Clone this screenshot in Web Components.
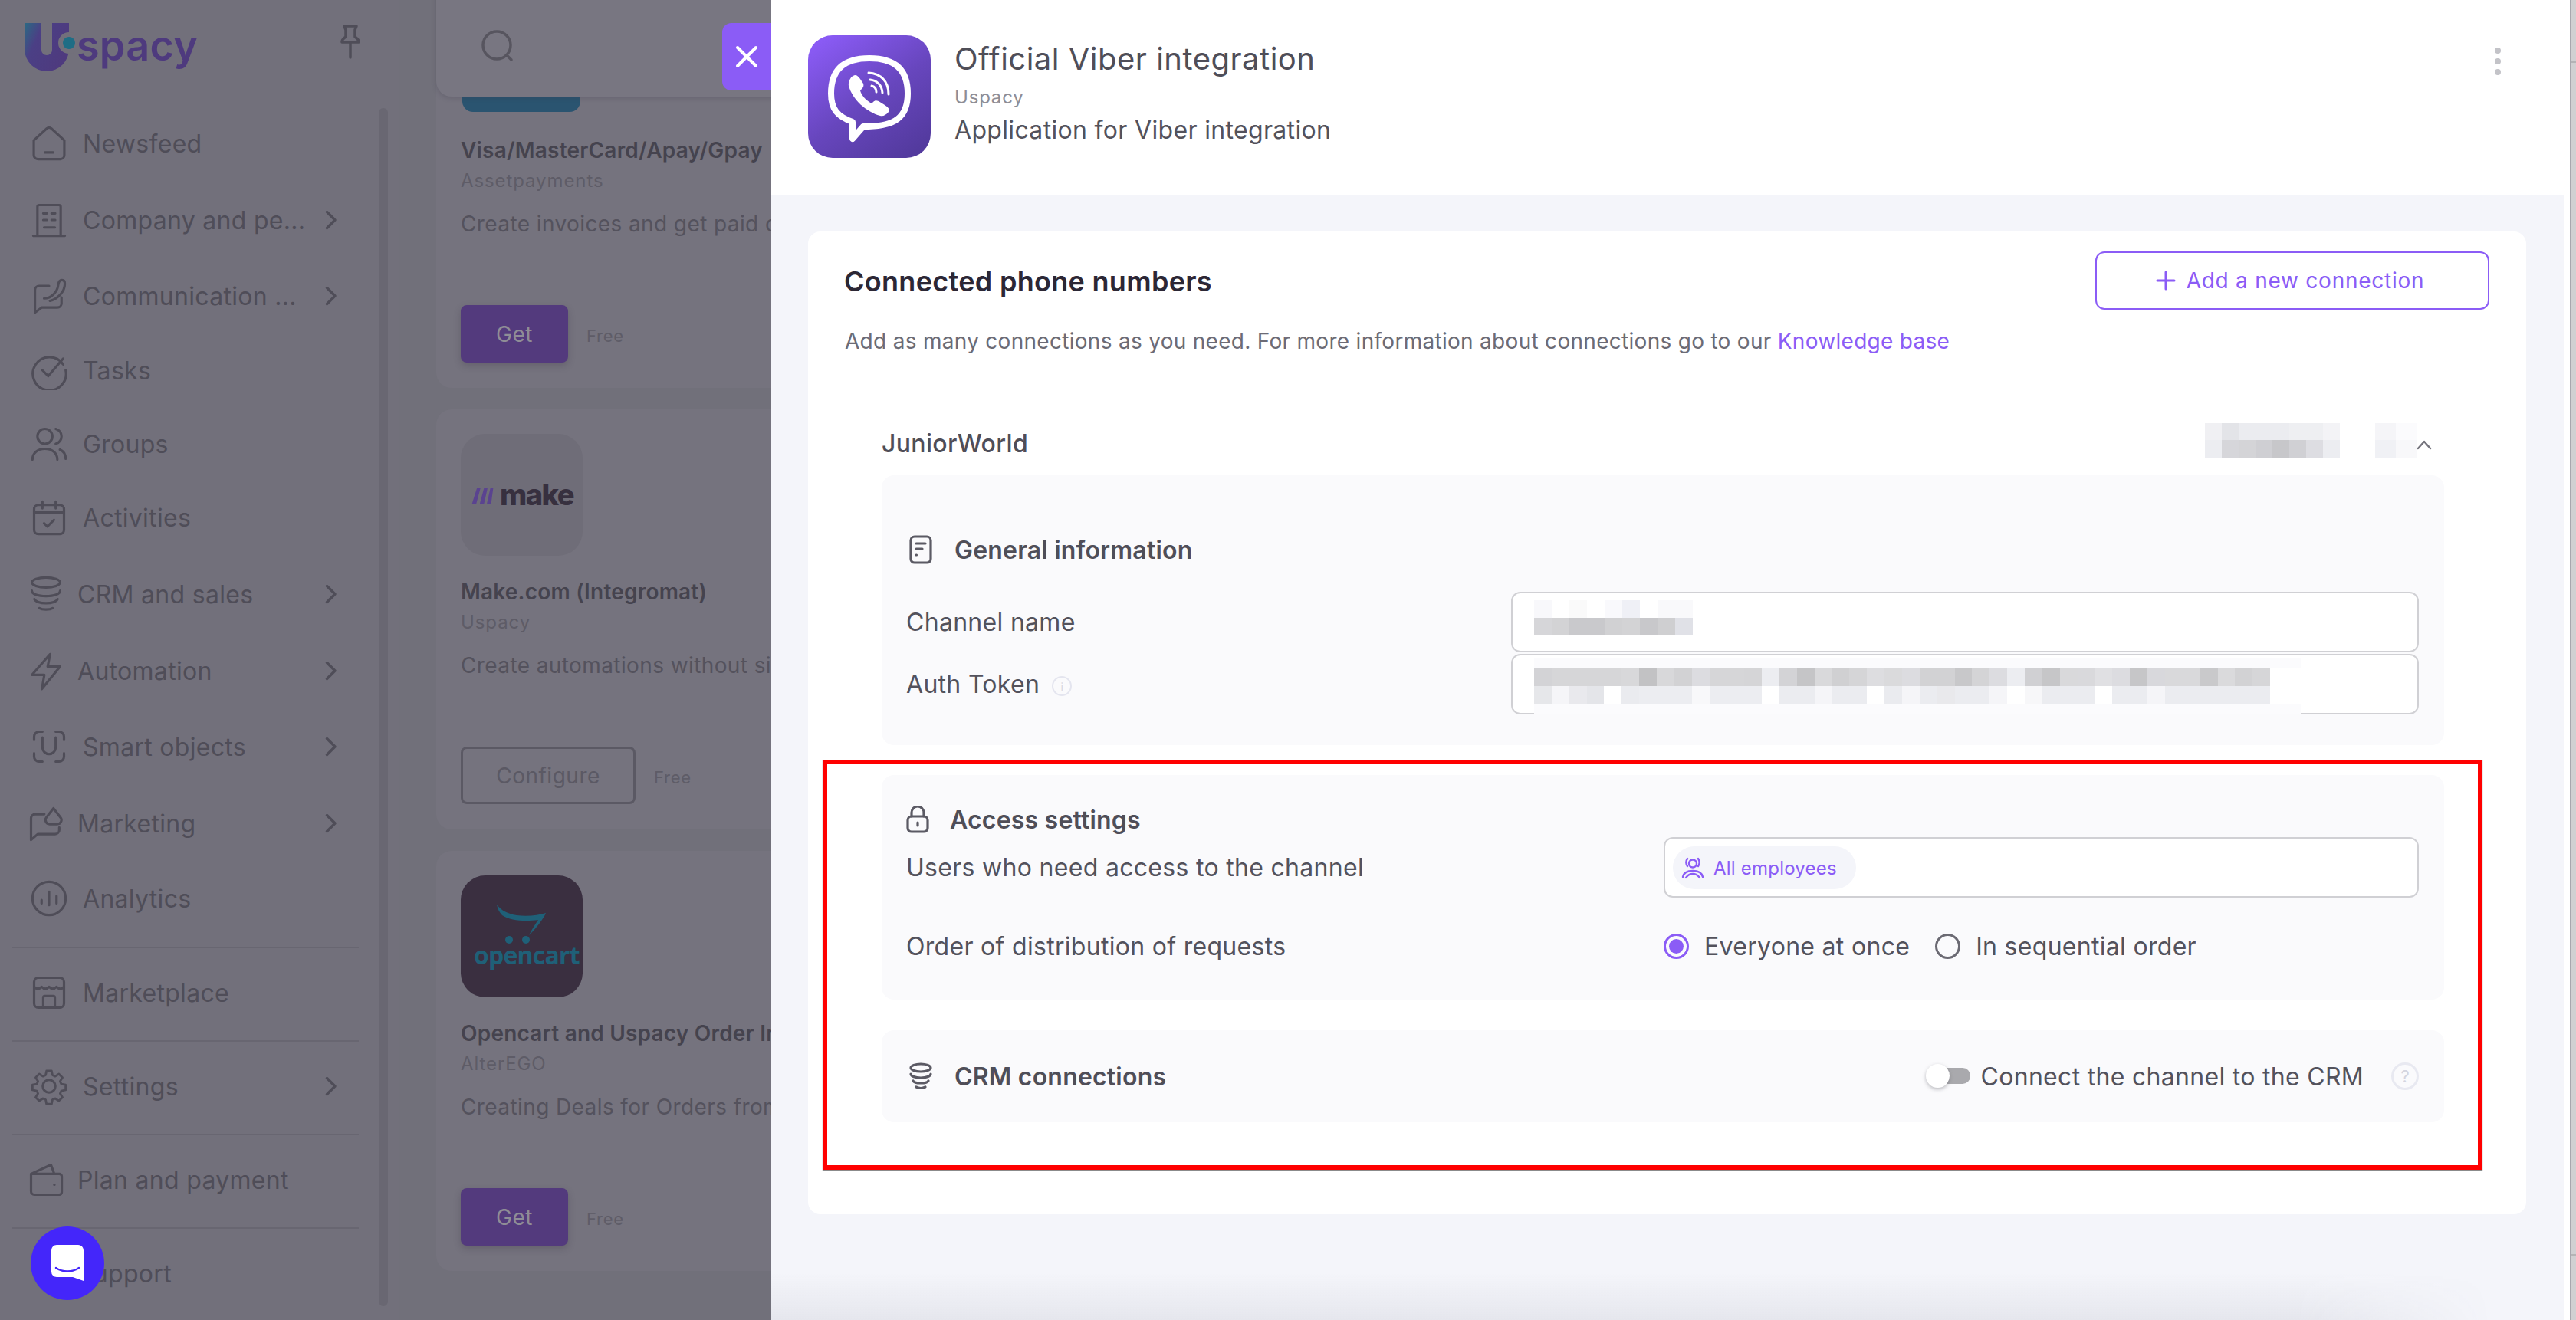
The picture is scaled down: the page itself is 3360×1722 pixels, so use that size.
<!DOCTYPE html>
<html lang="en"><head><meta charset="utf-8"><title>Official Viber integration</title>
<style>
html,body{margin:0;padding:0;width:3360px;height:1722px;overflow:hidden;background:#75737e;font-family:Inter,"Liberation Sans",sans-serif}
</style></head><body>
<app-root></app-root>
<script>
const FONT='font-family:Inter,"Liberation Sans",sans-serif;';
const def=(name,html,init)=>customElements.define(name,class extends HTMLElement{
  constructor(){super();this.attachShadow({mode:'open'});}
  connectedCallback(){ if(this.done)return; this.done=1; this.shadowRoot.innerHTML=typeof html==='function'?html(this):html; }
});
const S=(p,w,h,sw,c,vb)=>`<svg width="${w}" height="${h}" viewBox="${vb||'0 0 24 24'}" fill="none" stroke="${c}" stroke-width="${sw}" stroke-linecap="round" stroke-linejoin="round" style="display:block;flex:none">${p}</svg>`;
const NAV={
home:'<path d="M2.800 10.200 10.700 3a2 2 0 0 1 2.600 0l7.900 7.200V19a2.500 2.500 0 0 1-2.500 2.500H5.300A2.500 2.500 0 0 1 2.800 19ZM9.500 17.500h5"/>',
building:'<path d="M5 21.500V4a1 1 0 0 1 1-1h12a1 1 0 0 1 1 1v17.500M2.500 21.500h19M8.500 8h2.200M13.500 8h2.200M8.500 12h2.200M13.500 12h2.200M9 16.500h6.500"/>',
comm:'<path d="M12 6H6a2.500 2.500 0 0 0-2.500 2.500v13.500l4-3H17a2.500 2.500 0 0 0 2.500-2.500V13"/><path d="M9 13.500c4.500 0 8-4 8.500-8 .2-1.800 1-3 2.300-3 1.200 0 1.700 1 1.700 2.200 0 4-3.500 9-9 10.300"/>',
tasks:'<path d="M20.500 8.500A10 10 0 1 0 22 12M8 12l3.500 3.500L20.500 5"/>',
groups:'<circle cx="9.500" cy="7.500" r="4.500"/><path d="M2 21.500c0-4 3.200-6.500 7.500-6.500s7.500 2.500 7.500 6.500M16 3c2.500.8 3.500 2.500 3.500 4.500s-1 3.700-3.500 4.500M18.500 15.500c2 .8 3.500 2.800 3.500 5.500"/>',
calendar:'<rect x="3" y="4.500" width="18" height="17.500" rx="2.500"/><path d="M8 2.500v4M16 2.500v4M3 9h18M9 15.500l2 2 4-4"/>',
crm:'<ellipse cx="12" cy="5" rx="8.500" ry="3"/><path d="M3.500 10c0 2 3.500 3.200 8.500 3.200s8.500-1.200 8.500-3.200M5 15c.5 1.500 3.500 2.500 7 2.500s6.500-1 7-2.500M8 20.500c1 .6 2.400.8 4 .8s3-.2 4-.8"/>',
bolt:'<path d="M14.500 2 3.500 14.500h7.500L9.500 23l11-13.500h-7.500Z"/>',
smart:'<path d="M8 3H6a3 3 0 0 0-3 3v2M16 3h2a3 3 0 0 1 3 3v2M3 16v2a3 3 0 0 0 3 3h2M21 16v2a3 3 0 0 1-3 3h-2M8 6.500v6a4 4 0 0 0 8 0v-6"/>',
mkt:'<path d="M11 6.500H5.500A2.500 2.500 0 0 0 3 9v13l4-3.500h10.500A2.500 2.500 0 0 0 20 16v-1.500"/><path d="M16.500 3l4.300 5.500a2.500 2.500 0 0 1-2 4h-4.600a2.500 2.500 0 0 1-2-4Z"/>',
chart:'<circle cx="12" cy="12" r="10"/><path d="M7.500 15v-2M12 16V8M16.500 15v-4.500"/>',
store:'<rect x="3" y="3" width="18" height="18" rx="2.500"/><path d="M3 8.500c1.500 1.500 3 1.500 4.500 0 1.500 1.500 3 1.500 4.500 0 1.500 1.500 3 1.500 4.500 0 1.500 1.500 3 1.500 4.500 0M8.500 21v-6a1 1 0 0 1 1-1h5a1 1 0 0 1 1 1v6"/>',
gear:'<circle cx="12" cy="12" r="3.800"/><path d="M10.300 2.500h3.400l.6 2.900 1.800.8 2.500-1.600 2.400 2.400-1.600 2.500.8 1.800 2.900.6v3.400l-2.900.6-.8 1.800 1.600 2.500-2.400 2.400-2.500-1.600-1.800.8-.6 2.900h-3.400l-.6-2.900-1.800-.8-2.500 1.600-2.400-2.400 1.600-2.500-.8-1.800-2.900-.6v-3.400l2.900-.6.8-1.800-1.600-2.500 2.400-2.400 2.500 1.600 1.800-.8Z" transform="translate(12 12) scale(.9) translate(-12 -12.800)"/>',
wallet:'<path d="M3 8.500V19a2 2 0 0 0 2 2h15a1.500 1.500 0 0 0 1.500-1.500V10A1.500 1.500 0 0 0 20 8.500H3Zm0 0L15 3l2 5.500M17 15h.1"/>',
support:''
};
const CHEV=`<svg width="16" height="26" viewBox="0 0 16 26" fill="none" stroke="#4f4d58" stroke-width="3.500" stroke-linecap="round" stroke-linejoin="round" style="display:block"><path d="M2.500 2.500 13 13 2.500 23.500"/></svg>`;

def('nav-item',h=>{
  const tight=h.hasAttribute('tight'), ic=h.getAttribute('icon');
  return `<style>
  :host{display:flex;align-items:center;height:${h.getAttribute('h')}px;${FONT}font-size:32px;color:#4f4d58;letter-spacing:.3px}
  .ic{width:${tight?'67':'70'}px;margin-left:${tight?'34':'38'}px;flex:none}
  .t{white-space:nowrap;flex:none}
  .c{position:absolute;left:424px}
  </style><div class="ic">${NAV[ic]?S(NAV[ic],52,52,1.450,'#4f4d58'):''}</div><div class="t"><slot></slot></div>${h.hasAttribute('more')?`<div class="c">${CHEV}</div>`:''}`;
});
def('nav-sep',h=>`<style>:host{display:block;height:2px;margin:${h.getAttribute('m')}px 52px 0 16px;background:#686671}</style>`);

def('uspacy-logo',`<style>
:host{display:flex;align-items:center;height:137px;position:relative}
.u{position:absolute;left:32px;top:30px;overflow:visible}
.t{position:absolute;left:100px;top:24px;font:600 54px/72px Inter,sans-serif;letter-spacing:.2px;color:#4e3a7e}
.p{position:absolute;left:443px;top:32px}
</style>
<svg class="u" width="58" height="63" viewBox="0 0 58 63"><defs><linearGradient id="g" x1="0" y1="0" x2="1" y2=".5"><stop offset="0" stop-color="#2b6a83"/><stop offset=".35" stop-color="#4b3f85"/><stop offset="1" stop-color="#4e3a7e"/></linearGradient></defs>
<path fill="url(#g)" d="M0 0H22V35A7 7 0 0 0 36 35V0H58V34A29 29 0 0 1 0 34Z"/><circle cx="58" cy="26" r="14" fill="#72707b"/><circle cx="58" cy="26" r="8" fill="#1f6d85"/></svg>
<div class="t">spacy</div>
<div class="p"><svg width="28" height="46" viewBox="0 0 28 46" fill="none" stroke="#4f4d58" stroke-width="3.500" stroke-linecap="round" stroke-linejoin="round"><path d="M6 2h16l-2 5v9c3 2 5 4 5 7H3c0-3 2-5 5-7V7ZM14 23v20"/></svg></div>`);

def('ui-sidebar',`<style>
:host{display:block;width:520px;height:1722px;background:#72707b;position:relative;flex:none;overflow:hidden}
.bar{position:absolute;left:494px;top:141px;width:12px;height:1563px;border-radius:6px;background:#696772}
</style>
<uspacy-logo></uspacy-logo>
<nav-item icon="home" h="100">Newsfeed</nav-item>
<nav-item icon="building" h="100" more>Company and pe...</nav-item>
<nav-item icon="comm" h="98" more>Communication ...</nav-item>
<nav-item icon="tasks" h="96">Tasks</nav-item>
<nav-item icon="groups" h="96">Groups</nav-item>
<nav-item icon="calendar" h="96">Activities</nav-item>
<nav-item icon="crm" h="104" tight more>CRM and sales</nav-item>
<nav-item icon="bolt" h="96" tight more>Automation</nav-item>
<nav-item icon="smart" h="102" more>Smart objects</nav-item>
<nav-item icon="mkt" h="98" tight more>Marketing</nav-item>
<nav-item icon="chart" h="98">Analytics</nav-item>
<nav-sep m="14"></nav-sep>
<nav-item icon="store" h="116">Marketplace</nav-item>
<nav-sep m="4"></nav-sep>
<nav-item icon="gear" h="116" more>Settings</nav-item>
<nav-sep m="4"></nav-sep>
<nav-item icon="wallet" h="116" tight>Plan and payment</nav-item>
<nav-sep m="4"></nav-sep>
<nav-item icon="support" h="116" tight>Support</nav-item>
<div class="bar"></div>`);

def('market-card',h=>{
  const btn=h.getAttribute('btn');
  return `<style>
  :host{display:block;height:548px;width:1100px;flex:none;box-sizing:border-box;padding:32px 0 0 32px;background:#75737e;border-radius:20px;${FONT}white-space:nowrap;overflow:hidden}
  .lw{height:160px}
  .n{margin-top:26px;font-size:28px;line-height:40px;font-weight:600;color:#45434e;letter-spacing:.2px}
  .c{margin-top:4px;font-size:24px;line-height:32px;color:#5e5c67;letter-spacing:.9px}
  .d{margin-top:20px;font-size:28px;line-height:40px;color:#54525d;letter-spacing:.4px}
  .a{margin-top:86px;display:flex;align-items:center;gap:24px}
  .b{box-sizing:border-box;height:75px;display:flex;align-items:center;justify-content:center;font-size:28px;letter-spacing:.5px;border-radius:8px}
  .g{width:140px;background:#533a7d;color:#8f8d96;box-shadow:0 4px 10px rgba(50,45,60,.25)}
  .o{width:228px;border:3px solid #5b5964;color:#5b5964}
  .f{font-size:22px;letter-spacing:.7px;color:#5e5c67;margin-top:4px}
  </style><div class="lw"><slot name="logo"></slot></div><div class="n">${h.getAttribute('name')}</div><div class="c">${h.getAttribute('co')}</div><div class="d">${h.getAttribute('desc')}</div>
  <div class="a"><div class="b ${btn==='Get'?'g':'o'}">${btn}</div><div class="f">Free</div></div>`;
});
def('make-logo',`<style>:host{display:block;width:159px;height:159px;border-radius:32px;background:#6f6d78;overflow:hidden}
.w{display:flex;align-items:center;height:159px;padding-left:13px;gap:7px}
.t{font:800 38px/1 Inter,sans-serif;letter-spacing:-1.500px;color:#37303f;margin-top:-2px}</style>
<div class="w"><svg width="31" height="24" viewBox="0 0 30 26" style="margin-top:2px"><path fill="#5a4390" d="M7 2h5L6 24H0ZM17 2h5l-5 22h-6ZM26 2h4l-3 22h-6Z"/></svg><div class="t">make</div></div>`);
def('cart-logo',`<style>:host{display:block;width:159px;height:159px;border-radius:32px;background:#3a2f40;overflow:hidden;position:relative}
.t{position:absolute;left:17px;top:84px;font:700 32px/40px "Open Sans",Inter,sans-serif;letter-spacing:-.8px;color:#1f6078}
svg{position:absolute;left:44px;top:38px}</style>
<svg width="70" height="56" viewBox="0 0 70 56" fill="#1f6078"><path d="M3 0c6 8 14 12 26 14 14 2 28 0 38-3-2 6-14 22-22 29 4-8 8-14 12-20-14 2-36 2-47-6C6 10 4 5 3 0Z"/><circle cx="19" cy="46" r="5"/><circle cx="41" cy="46" r="5"/></svg>
<div class="t">opencart</div>`);
def('visa-logo',`<style>:host{display:block;width:154px;height:156px;margin-left:2px;border-radius:0 0 14px 14px;background:#2a5470}</style>`);

def('search-bar',`<style>:host{display:block;position:absolute;left:569px;top:-10px;width:600px;height:136px;background:#787681;border-radius:0 0 20px 20px;box-shadow:0 2px 6px rgba(60,55,70,.25)}
svg{position:absolute;left:59px;top:49px}</style>
<svg width="44" height="44" viewBox="0 0 44 44" fill="none" stroke="#57555f" stroke-width="3.500" stroke-linecap="round"><circle cx="20" cy="20" r="18"/><path d="M33 33l6 6"/></svg>`);
def('close-tab',`<style>:host{display:flex;align-items:center;justify-content:center;position:absolute;left:942px;top:30px;width:64px;height:88px;background:#8b5cf6;border-radius:12px 0 0 12px}</style>
<svg width="32" height="32" viewBox="0 0 32 32" fill="none" stroke="#fff" stroke-width="4" stroke-linecap="round"><path d="M4 4l24 24M28 4 4 28"/></svg>`);
def('chat-bubble',`<style>:host{display:block;position:absolute;left:40px;top:1600px;width:96px;height:96px;border-radius:50%;background:#4426fa}
svg{position:absolute;left:27px;top:24px}</style>
<svg width="42" height="47" viewBox="0 0 42 47"><path fill="#fff" d="M7 0h28a7 7 0 0 1 7 7v40l-14-5H7a7 7 0 0 1-7-7V7a7 7 0 0 1 7-7Z"/><path d="M6 30c9 6 21 6 30 0" fill="none" stroke="#4426fa" stroke-width="2.500" stroke-linecap="round"/></svg>`);

def('market-area',`<style>:host{display:flex;flex-direction:column;gap:28px;padding-left:49px;margin-top:-42px;height:1764px;flex:1;background:#71707a;overflow:hidden;box-sizing:border-box}</style><slot></slot>`);

const BLUR={
ch1:'f8f8fb ffffff fafafa ffffff f9f9fc eff0f6 ffffff f9f9fb f9f9fb',
ch2:'d6d6d9 d3d3d5 c9c9cc c9c9cc d1d1d3 d3d3d5 c8c8cb cfcfd1 e0e1e7',
a2:'d3d3d6 d6d6d8 d6d6d8 d6d6d8 d6d6d8 d8d8da c2c2c4 d8d8da d2d2d4 dcdce0 d6d6d8 d6d6d8 d5d5d7 ecedf1 d3d3d6 c5c5c7 d9d9db d0d0d2 d5d5d7 dddde0 dadadc dcdce0 d2d2d4 d2d2d4 c8c8ca d4d4d6 dcdce0 ecedf1 d0d0d3 c6c6c8 d9d9db d9d9dc e0e0e3 dcdce0 c6c6c8 d8d8dc d9d9db d9d9db c9c9cb dadadc d2d2d4 d6d6d8',
a3:'e6e7ea f5f5f8 e9e9ed e4e5e9 ffffff eaebef ecedf1 ecedf1 ecedf1 f8f8fa ecedf1 ecedf1 ecedf1 ffffff ebecf0 ebecf0 f5f5f8 ebecf0 ebecf0 ffffff eaebef f5f5f8 ebecf0 e9e9ec ebecf0 ebecf0 f5f5f8 ffffff f7f7f9 ebecf0 ebecf0 ebecf0 ffffff ebecf0 ebecf0 f5f5f8 ebecf0 ebecf0 ebecf0 ebecf0 ebecf0 ebecf0',
j1:'f0f0f3 e3e4e8 ebecf0 ebecf0 ebecf0 eeeff2 eeeff2 f3f3f6',
j2:'ecedf1 d6d6da d4d4d7 cfcfd3 c7c7ca d0d0d4 dddde2 ecedf1',
k1:'f5f5f8 fbfbfd',k2:'f0f1f5 f8f8fa'
};
def('blur-row',h=>{
 const w=+h.getAttribute('w')||23, ht=+h.getAttribute('ht')||23;
 const cells=BLUR[h.getAttribute('k')].split(' ').map(c=>`<i style="background:#${c}"></i>`).join('');
 return `<style>:host{display:flex;height:${ht}px}i{display:block;width:${w}px;height:100%;flex:none}</style>${cells}`;
});
def('soft-strip',h=>`<style>:host{display:block;height:14px;width:${h.getAttribute('w')}px;background:#fbfbfd}</style>`);

def('text-field',h=>`<style>:host{display:block;box-sizing:border-box;height:79px;border:2px solid #d0d0d4;border-radius:12px;background:#fff;padding:${h.getAttribute('pt')||9}px 0 0 ${h.getAttribute('pl')||29}px}</style><slot></slot>`);
def('section-title',h=>`<style>:host{display:flex;align-items:center;height:44px;${FONT}font-size:32px;font-weight:600;color:#4f4e58;letter-spacing:.2px}
.i{width:${h.getAttribute('iw')||59}px;margin-left:${h.getAttribute('il')||4}px}</style><div class="i"><slot name="i"></slot></div><slot></slot>`);
def('field-grid',h=>`<style>:host{display:grid;grid-template-columns:${h.getAttribute('col')}px 1fr;align-items:center;${FONT}font-size:32px;color:#53525c;letter-spacing:.3px;white-space:nowrap;row-gap:${h.getAttribute('gap')||0}px}</style><slot></slot>`);
def('soft-panel',h=>`<style>:host{display:block;background:#fafafc;border-radius:16px;box-sizing:border-box;padding:${h.getAttribute('p')}}</style><slot></slot>`);
def('radio-opt',h=>`<style>:host{display:flex;align-items:center;gap:20px;${FONT}font-size:32px;color:#53525c;letter-spacing:.3px}
.r{box-sizing:border-box;width:33px;height:33px;border-radius:50%;border:3px solid ${h.hasAttribute('on')?'#8b5cf6':'#6b6a73'};display:flex;align-items:center;justify-content:center;flex:none}
.d{width:19px;height:19px;border-radius:50%;background:#8b5cf6}</style><div class="r">${h.hasAttribute('on')?'<div class="d"></div>':''}</div><slot></slot>`);
def('user-chip',`<style>:host{box-sizing:border-box;display:flex;align-items:center;gap:12px;width:239px;height:56px;border-radius:28px;background:#f4f5fa;padding-left:11px;${FONT}font-size:24px;color:#8b5cf6;letter-spacing:.22px}</style>
<svg width="30" height="30" viewBox="0 0 30 30" fill="none" stroke="#8b5cf6" stroke-width="2.400" stroke-linecap="round" stroke-linejoin="round"><circle cx="15" cy="9.500" r="5"/><path d="M8 3c-2 3-2 7 0 10M22 3c2 3 2 7 0 10M2 27c1-5 5-8 13-8s12 3 13 8M6 28c2-2 3-5 9-5s7 3 9 5"/></svg><slot></slot>`);
def('crm-switch',`<style>:host{display:flex;align-items:center;${FONT}font-size:32px;color:#53525c;letter-spacing:.3px;white-space:nowrap}
.s{position:relative;width:58px;height:32px;margin-right:14px;flex:none}
.t{position:absolute;left:16px;right:0;top:5px;height:21px;border-radius:4px 10px 10px 4px;background:#a9a9ad}
.k{position:absolute;left:0;top:0;width:31px;height:31px;border-radius:50%;background:#fff;box-shadow:0 2px 5px rgba(70,70,80,.35)}
.h{box-sizing:border-box;width:36px;height:36px;margin-left:36px;border:3px solid #e8e9f1;border-radius:50%;display:flex;align-items:center;justify-content:center;color:#d4d5df;font-size:22px;letter-spacing:0}</style>
<div class="s"><div class="t"></div><div class="k"></div></div><slot></slot><div class="h">?</div>`);

const VIBER=`<svg width="160" height="160" viewBox="0 0 160 160" style="display:block;flex:none"><defs><linearGradient id="vg" x1="0.1" y1="0" x2=".8" y2="1"><stop offset="0" stop-color="#8c5cf8"/><stop offset=".55" stop-color="#6746bd"/><stop offset="1" stop-color="#533a9e"/></linearGradient></defs>
<rect width="160" height="160" rx="32" fill="url(#vg)"/>
<path d="M80 30C112 30 130 44 130 76 130 108 112 118 79 119H72L58 135V113C38 106 30 96 30 76 30 44 48 30 80 30Z" fill="none" stroke="#fff" stroke-width="8" stroke-linejoin="round"/>
<path fill="#fff" d="M61 52C64 52 66 54 68 57L72 63C73 66 72 68 70 70L68 72C69 77 75 85 83 89L85 87C87 85 89 85 92 86L100 91C105 94 107 97 105 100 102 104 98 106 94 105 76 100 58 84 53 66 52 60 56 53 61 52Z"/>
<path d="M79 49C95 50 105 60 105 77M81 58C90 59 96 65 97 75M83 66C87 67 89 70 89 74" fill="none" stroke="#fff" stroke-width="3" stroke-linecap="round"/></svg>`;

def('drawer-header',`<style>:host{display:flex;box-sizing:border-box;height:254px;background:#fff;padding:46px 0 0 48px;position:relative;${FONT}white-space:nowrap}
.x{margin-left:31px;padding-top:3px}
.t{font-size:40px;line-height:56px;color:#4f4e58;letter-spacing:.5px}
.s{font-size:24px;line-height:32px;margin-top:6px;color:#8e8d95;letter-spacing:.8px}
.d{font-size:32px;line-height:44px;margin-top:5px;color:#53525c;letter-spacing:.33px}
.m{position:absolute;left:2248px;top:62px;display:flex;flex-direction:column;gap:6px}
.m i{display:block;width:8px;height:8px;border-radius:50%;background:#c3c3c8}</style>
${VIBER}<div class="x"><div class="t">Official Viber integration</div><div class="s">Uspacy</div><div class="d">Application for Viber integration</div></div>
<div class="m"><i></i><i></i><i></i></div>`);

def('add-btn',`<style>:host{box-sizing:border-box;display:flex;align-items:center;justify-content:center;gap:14px;width:514px;height:76px;padding-right:6px;border:2px solid #8b5cf6;border-radius:12px;${FONT}font-size:28px;color:#8b5cf6;letter-spacing:.75px;flex:none}</style>
<svg width="26" height="26" viewBox="0 0 26 26" stroke="#8b5cf6" stroke-width="3" stroke-linecap="round"><path d="M13 2v22M2 13h22"/></svg><slot></slot>`);

const ICO={
 doc:`<svg slot="i" width="30" height="38" viewBox="0 0 30 38" fill="none" stroke="#5b5a64" stroke-width="3.200" stroke-linecap="round" style="display:block"><rect x="2" y="2" width="26" height="34" rx="5"/><path d="M9 11h12M9 18h8M9 26h.5"/></svg>`,
 lock:`<svg slot="i" width="30" height="36" viewBox="0 0 30 36" fill="none" stroke="#5b5a64" stroke-width="3.200" stroke-linecap="round" style="display:block"><rect x="2" y="14" width="26" height="20" rx="5"/><path d="M7 14V9a8 8 0 0 1 16 0v5M15 22v4"/></svg>`,
 crm:`<svg slot="i" width="32" height="36" viewBox="0 0 32 36" fill="none" stroke="#5b5a64" stroke-width="3.200" stroke-linecap="round" style="display:block"><ellipse cx="16" cy="7" rx="13" ry="5"/><path d="M3 15c0 3 6 5 13 5s13-2 13-5M6 24c1 2 5 3 10 3s9-1 10-3M10 32c2 1 4 1.500 6 1.500s4-.5 6-1.500"/></svg>`
};

def('connections-card',`<style>
:host{display:block;box-sizing:border-box;height:1282px;background:#fff;border-radius:16px;padding:26px 48px 0;${FONT}white-space:nowrap}
.top{display:flex;justify-content:space-between;align-items:center}
h2{margin:0;font-size:36px;font-weight:600;color:#2c2735;letter-spacing:.3px;line-height:44px;margin-top:2px;margin-left:-1px}
.desc{margin-top:21px;font-size:28px;line-height:40px;color:#6c6b75;letter-spacing:.29px}
.desc a{color:#8b5cf6;text-decoration:none}
.box{margin:0 59px 0 48px}
.head{display:flex;align-items:center;height:81px;margin-top:74px;font-size:32px;color:#4f4e58;letter-spacing:.35px;font-weight:500}
.head .nm{flex:1;margin-bottom:2px}
.bl{margin-bottom:11px;margin-right:0}
.gp{display:flex;align-items:center}
.info{display:inline-flex;align-items:center;justify-content:center;box-sizing:border-box;width:26px;height:26px;border:2px solid #e4e5ef;border-radius:50%;color:#d5d6e0;font-size:14px;margin-left:16px;vertical-align:middle;letter-spacing:0}
.mt{margin-top:33px}
.p2{margin-top:39px}.p3{margin-top:40px}
.rr{display:flex;gap:33px}
.crm{display:flex;align-items:center;justify-content:space-between;height:120px}
</style>
<div class="top"><h2>Connected phone numbers</h2><add-btn>Add a new connection</add-btn></div>
<div class="desc">Add as many connections as you need. For more information about connections go to our <a>Knowledge base</a></div>
<div class="box">
 <div class="head"><div class="nm">JuniorWorld</div>
  <div class="gp bl" style="gap:46px"><div><blur-row k="j1" w="22" ht="22"></blur-row><blur-row k="j2" w="22" ht="23"></blur-row></div><div><blur-row k="k1" w="27" ht="22"></blur-row><blur-row k="k2" w="27" ht="23"></blur-row></div></div>
  <svg width="20" height="14" viewBox="0 0 20 14" fill="none" stroke="#75747d" stroke-width="2.500" stroke-linecap="round" stroke-linejoin="round" style="margin-right:16px"><path d="M2 12 10 3l8 9"/></svg>
 </div>
 <soft-panel p="75px 33px 40px 32px">
  <section-title>${ICO.doc}General information</section-title>
  <div class="mt"><field-grid col="789" gap="2">
   <div>Channel name</div><text-field pt="9" pl="28"><blur-row k="ch1"></blur-row><blur-row k="ch2"></blur-row></text-field>
   <div>Auth Token<span class="info">i</span></div>
   <text-field pt="3" pl="28"><soft-strip w="1000"></soft-strip><blur-row k="a2" w="22.86"></blur-row><blur-row k="a3" w="22.86"></blur-row><soft-strip w="1000"></soft-strip></text-field>
  </field-grid></div>
 </soft-panel>
 <soft-panel class="p2" p="36px 33px 50px 32px" style="display:block">
  <section-title il="0" iw="57">${ICO.lock}Access settings</section-title>
  <div style="margin-top:1px"><field-grid col="988" gap="44">
   <div>Users who need access to the channel</div><text-field pt="10" pl="10"><user-chip>All employees</user-chip></text-field>
   <div>Order of distribution of requests</div><div class="rr"><radio-opt on>Everyone at once</radio-opt><radio-opt>In sequential order</radio-opt></div>
  </field-grid></div>
 </soft-panel>
 <soft-panel class="p3" p="0 33px 0 32px"><div class="crm"><section-title il="3" iw="60">${ICO.crm}CRM connections</section-title><crm-switch>Connect the channel to the CRM</crm-switch></div></soft-panel>
</div>`);

def('viber-drawer',`<style>
:host{display:flex;position:absolute;left:1006px;top:0;width:2354px;height:1722px;background:#fff}
.m{width:2338px;display:flex;flex-direction:column;background:#f4f5fa}
.b{flex:1;padding:48px 49px 0 48px;position:relative}
.g{width:8px;background:#fff;flex:none}
.sc{width:8px;flex:none;box-sizing:border-box;border-left:1px solid #a8a7ae;background:linear-gradient(#d0d0d2 79px,#b4b4b6 79px,#b4b4b6 82px,#d0d0d2 82px,#d0d0d2 1636px,#b4b4b6 1636px,#b4b4b6 1639px,#d0d0d2 1639px)}
.sh{position:absolute;left:0;top:1660px;height:62px;background:linear-gradient(rgba(70,72,95,0),rgba(70,72,95,.08));-webkit-mask-image:linear-gradient(90deg,#000 85%,transparent 96%);pointer-events:none}
</style>
<div class="m"><drawer-header></drawer-header><div class="b"><connections-card></connections-card></div></div><div class="g"></div><div class="sc"></div><div class="sh" style="right:16px"></div>`);

def('focus-frame',`<style>:host{display:block;position:absolute;left:1073px;top:991px;width:2165px;height:535px;box-sizing:border-box;border:6px solid #f00;box-shadow:0 1px 1px rgba(90,90,90,.7)}</style>`);

def('app-root',`<style>:host{display:flex;position:relative;width:3360px;height:1722px;overflow:hidden}</style>
<ui-sidebar></ui-sidebar>
<market-area>
 <market-card name="Visa/MasterCard/Apay/Gpay" co="Assetpayments" desc="Create invoices and get paid online" btn="Get"><visa-logo slot="logo"></visa-logo></market-card>
 <market-card name="Make.com (Integromat)" co="Uspacy" desc="Create automations without single line of code" btn="Configure"><make-logo slot="logo"></make-logo></market-card>
 <market-card name="Opencart and Uspacy Order Integration" co="AlterEGO" desc="Creating Deals for Orders from Opencart" btn="Get"><cart-logo slot="logo"></cart-logo></market-card>
</market-area>
<search-bar></search-bar><close-tab></close-tab><chat-bubble></chat-bubble>
<viber-drawer></viber-drawer><focus-frame></focus-frame>`);
</script>
</body></html>
